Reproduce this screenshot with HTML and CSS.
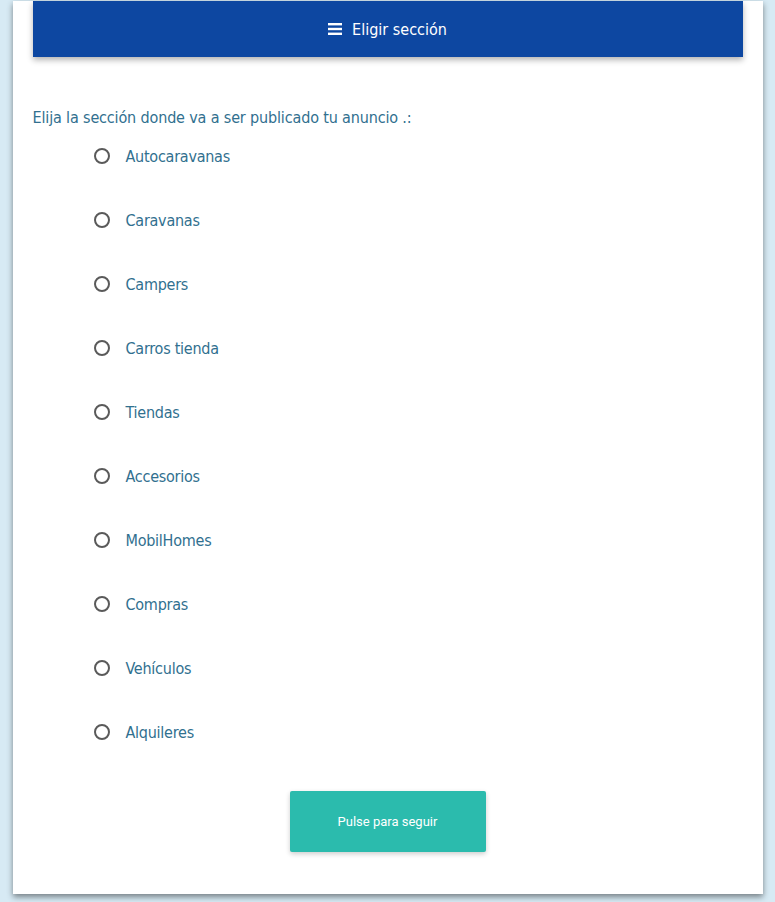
FILE: index.html
```
<!DOCTYPE html>
<html lang="es">
<head>
  <meta charset="UTF-8">
  <title>Elegir sección</title>
  <link rel="stylesheet" href="styles.css">
</head>
<body>
  <main class="card">
    <header class="card-header">
      <svg class="menu-icon" width="14" height="12" viewBox="0 0 14 12"><rect y="0" width="14" height="2.4" fill="#fff"/><rect y="4.8" width="14" height="2.4" fill="#fff"/><rect y="9.6" width="14" height="2.4" fill="#fff"/></svg>
      <span>Eligir sección</span>
    </header>
    <form class="section-form">
      <p class="question">Elija la sección donde va a ser publicado tu anuncio .:</p>
      <ul class="options">
        <li><label><input type="radio" name="seccion"><span class="dot"></span>Autocaravanas</label></li>
        <li><label><input type="radio" name="seccion"><span class="dot"></span>Caravanas</label></li>
        <li><label><input type="radio" name="seccion"><span class="dot"></span>Campers</label></li>
        <li><label><input type="radio" name="seccion"><span class="dot"></span>Carros tienda</label></li>
        <li><label><input type="radio" name="seccion"><span class="dot"></span>Tiendas</label></li>
        <li><label><input type="radio" name="seccion"><span class="dot"></span>Accesorios</label></li>
        <li><label><input type="radio" name="seccion"><span class="dot"></span>MobilHomes</label></li>
        <li><label><input type="radio" name="seccion"><span class="dot"></span>Compras</label></li>
        <li><label><input type="radio" name="seccion"><span class="dot"></span>Vehículos</label></li>
        <li><label><input type="radio" name="seccion"><span class="dot"></span>Alquileres</label></li>
      </ul>
      <div class="actions">
        <button type="submit">Pulse para seguir</button>
      </div>
    </form>
  </main>
</body>
</html>
```

FILE: styles.css
```
body {
  margin: 0;
  background-color: #d7eaf4;
  font-family: "DejaVu Sans Condensed", "Liberation Sans", sans-serif;
  height: 902px;
  overflow: hidden;
}

.card {
  width: 750px;
  margin: 31px auto 0;
  background-color: #fff;
  box-shadow: 0 3px 6px rgba(0, 0, 0, 0.45);
  padding-bottom: 42px;
}

.card-header {
  margin: -30px 20px 0;
  height: 56px;
  background-color: #0d47a1;
  color: #fff;
  display: flex;
  justify-content: center;
  align-items: center;
  gap: 10px;
  font-size: 16px;
  box-shadow: 0 3px 6px rgba(0, 0, 0, 0.3);
}

.section-form {
  padding: 0 20px;
}

.question {
  margin: 51px 0 0;
  font-size: 16px;
  line-height: 20px;
  letter-spacing: -0.15px;
  color: #31708f;
}

.options {
  list-style: none;
  margin: 0;
  padding: 0 0 0 61px;
}

.options li {
  height: 64px;
  display: flex;
  align-items: flex-start;
}

.options label {
  display: flex;
  align-items: center;
  height: 20px;
  margin-top: 18px;
  color: #31708f;
  font-size: 16px;
  letter-spacing: -0.25px;
  cursor: pointer;
}

.options input {
  display: none;
}

.dot {
  width: 12px;
  height: 12px;
  border: 2px solid #5a5a5a;
  border-radius: 50%;
  margin-right: 16px;
}

.actions {
  display: flex;
  justify-content: center;
  margin-top: 23px;
}

button {
  width: 196px;
  height: 61px;
  border: none;
  border-radius: 2px;
  background-color: #2bbbad;
  color: #fff;
  font-family: Roboto, sans-serif;
  font-size: 13px;
  box-shadow: 0 2px 5px rgba(0, 0, 0, 0.2);
}
```
